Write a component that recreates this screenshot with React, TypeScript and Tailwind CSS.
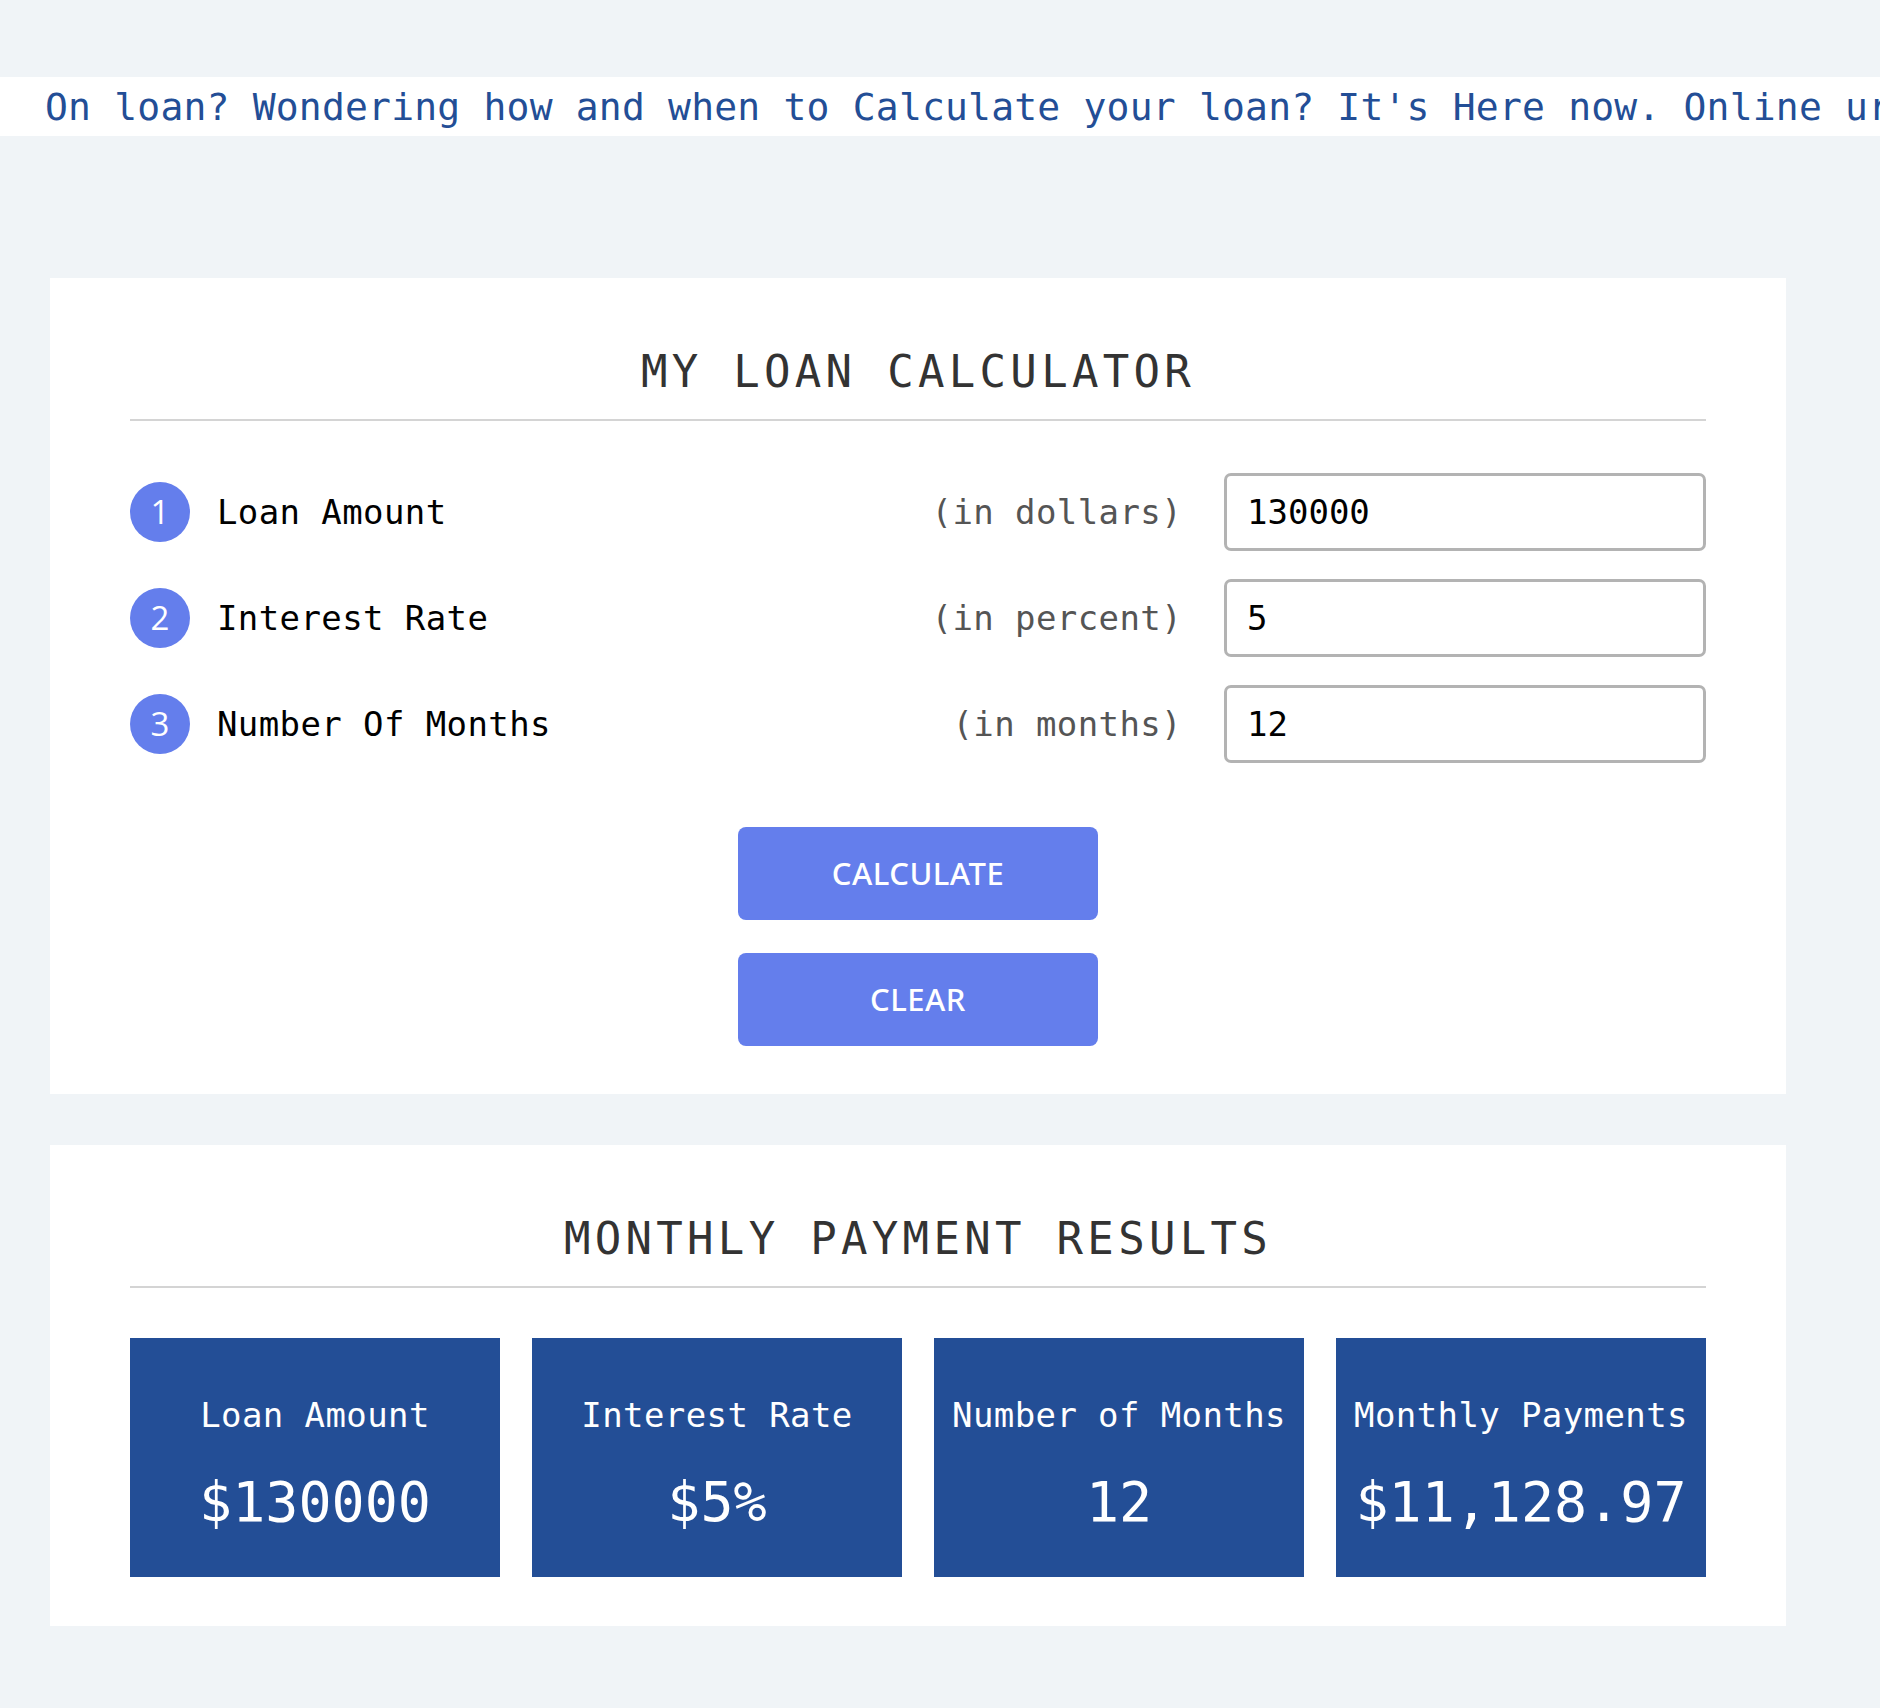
const mono = "font-['DejaVu_Sans_Mono',monospace]"

const fields = [
  { n: 1, label: "Loan Amount", hint: "(in dollars)", value: "130000" },
  { n: 2, label: "Interest Rate", hint: "(in percent)", value: "5" },
  { n: 3, label: "Number Of Months", hint: "(in months)", value: "12" },
]

const results = [
  { label: "Loan Amount", value: "$130000" },
  { label: "Interest Rate", value: "$5%" },
  { label: "Number of Months", value: "12" },
  { label: "Monthly Payments", value: "$11,128.97" },
]

function Heading({ children }: { children: string }) {
  return (
    <div className="border-b-2 border-[#d4d4d4] pb-[25px]">
      <h2 className={`${mono} text-center text-[44px] leading-[44px] tracking-[4.3px] text-[#333333]`}>
        {children}
      </h2>
    </div>
  )
}

export default function App() {
  return (
    <main className={`min-h-[1708px] bg-[#f0f4f7] pt-[77px] ${mono}`}>
      {/* marquee strip */}
      <div className="bg-white h-[59px] flex items-center overflow-hidden whitespace-nowrap pl-[45px]">
        <span className="text-[38px] leading-none tracking-[0.2px] text-[#234e96]">
          On loan? Wondering how and when to Calculate your loan? It's Here now. Online urgent loan calculator for everyone.
        </span>
      </div>

      <div className="w-[1736px] ml-[50px] mt-[142px] flex flex-col gap-[51px]">
        {/* Calculator */}
        <section className="bg-white px-[80px] pt-[72px] pb-[48px]">
          <Heading>MY LOAN CALCULATOR</Heading>

          <div className="mt-[52px] flex flex-col gap-[28px]">
            {fields.map((f) => (
              <div key={f.n} className="flex items-center h-[78px]">
                <div className="w-[60px] h-[60px] rounded-full bg-[#647eec] flex items-center justify-center text-white text-[33px] font-medium font-['Open_Sans',sans-serif]">
                  {f.n}
                </div>
                <span className="ml-[27px] flex-1 text-[34px] tracking-[0.4px] text-black">{f.label}</span>
                <span className="text-[34px] tracking-[0.4px] text-[#555555]">{f.hint}</span>
                <input
                  readOnly
                  value={f.value}
                  className={`${mono} ml-[42px] w-[482px] h-[78px] border-[3px] border-[#b3b3b3] rounded-[7px] pl-[20px] text-[34px] text-black outline-none`}
                />
              </div>
            ))}
          </div>

          <div className="mt-[64px] flex flex-col items-center gap-[33px]">
            <button className="w-[360px] h-[93px] rounded-[8px] bg-[#647eec] text-white text-[31px] font-medium tracking-[0.5px] font-['Noto_Sans',sans-serif]">
              CALCULATE
            </button>
            <button className="w-[360px] h-[93px] rounded-[8px] bg-[#647eec] text-white text-[31px] font-medium tracking-[0.5px] font-['Noto_Sans',sans-serif]">
              CLEAR
            </button>
          </div>
        </section>

        {/* Results */}
        <section className="bg-white px-[80px] pt-[72px] pb-[49px]">
          <Heading>MONTHLY PAYMENT RESULTS</Heading>

          <div className="mt-[50px] grid grid-cols-4 gap-[32px]">
            {results.map((r) => (
              <div key={r.label} className="bg-[#234e96] h-[239px] flex flex-col items-center pt-[57px] text-white">
                <span className="text-[34px] leading-[40px] tracking-[0.4px] whitespace-nowrap">{r.label}</span>
                <span className="mt-[37px] text-[55px] leading-[60px] whitespace-nowrap">{r.value}</span>
              </div>
            ))}
          </div>
        </section>
      </div>
    </main>
  )
}
